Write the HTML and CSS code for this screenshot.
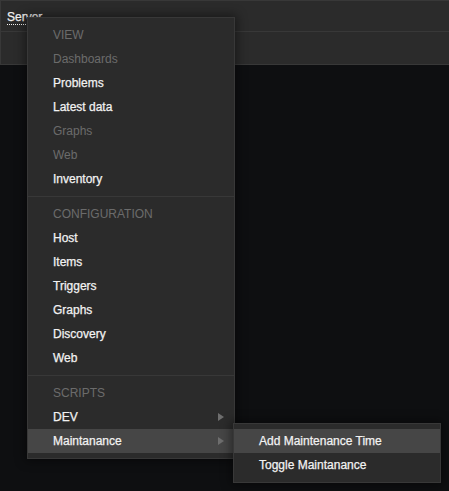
FILE: index.html
```html
<!DOCTYPE html>
<html>
<head>
<meta charset="utf-8">
<link rel="stylesheet" href="styles.css">
</head>
<body>
<div class="panel">
  <div class="row row-head"><a class="link-action">Server</a></div>
  <div class="row row-body"></div>
</div>

<ul class="menu-popup main-menu">
  <li class="header">View</li>
  <li class="item disabled">Dashboards</li>
  <li class="item">Problems</li>
  <li class="item">Latest data</li>
  <li class="item disabled">Graphs</li>
  <li class="item disabled">Web</li>
  <li class="item">Inventory</li>
  <li class="header sep">Configuration</li>
  <li class="item">Host</li>
  <li class="item">Items</li>
  <li class="item">Triggers</li>
  <li class="item">Graphs</li>
  <li class="item">Discovery</li>
  <li class="item">Web</li>
  <li class="header sep">Scripts</li>
  <li class="item has-sub">DEV<span class="arrow"></span></li>
  <li class="item has-sub selected">Maintanance<span class="arrow"></span></li>
</ul>

<ul class="menu-popup sub-menu">
  <li class="item selected">Add Maintenance Time</li>
  <li class="item">Toggle Maintanance</li>
</ul>
</body>
</html>
```

FILE: styles.css
```css
html, body {
  margin: 0;
  padding: 0;
}
body {
  background: #0e0f11;
  font-family: "Liberation Sans", Arial, sans-serif;
  font-size: 12px;
  color: #f2f2f2;
  width: 449px;
  height: 491px;
  overflow: hidden;
  position: relative;
}
.panel {
  background: #2b2b2b;
  border: 1px solid #383838;
  border-right: none;
}
.row-head {
  box-sizing: border-box;
  height: 31px;
  padding-left: 6px;
  padding-top: 9px;
  border-bottom: 1px solid #383838;
}
.row-body {
  height: 32px;
}
.link-action {
  color: #f2f2f2;
  line-height: 14px;
  border-bottom: 1px dotted #f2f2f2;
  display: inline-block;
  -webkit-text-stroke: 0.25px currentColor;
}
.menu-popup {
  position: absolute;
  margin: 0;
  padding: 5px 0;
  list-style: none;
  width: 208px;
  box-sizing: border-box;
  background: #2b2b2b;
  border: 1px solid #383838;
  box-shadow: 0 0 10px 2px rgba(0, 0, 0, 0.45);
}
.main-menu {
  left: 27px;
  top: 17px;
}
.sub-menu {
  left: 233px;
  top: 423px;
  z-index: 2;
}
.menu-popup li {
  height: 24px;
  line-height: 24px;
  padding-left: 25px;
  white-space: nowrap;
  position: relative;
}
.header {
  text-transform: uppercase;
  color: #6b6b6b;
}
.sep {
  margin-top: 5px;
  padding-top: 5px;
  border-top: 1px solid #383838;
}
.item {
  color: #f2f2f2;
  -webkit-text-stroke: 0.25px currentColor;
}
.item.disabled {
  color: #6b6b6b;
  -webkit-text-stroke: 0;
}
.item.selected {
  background: #464646;
}
.arrow {
  position: absolute;
  right: 10px;
  top: 8px;
  width: 0;
  height: 0;
  border-left: 6px solid #6e6e6e;
  border-top: 4px solid transparent;
  border-bottom: 4px solid transparent;
}
```
